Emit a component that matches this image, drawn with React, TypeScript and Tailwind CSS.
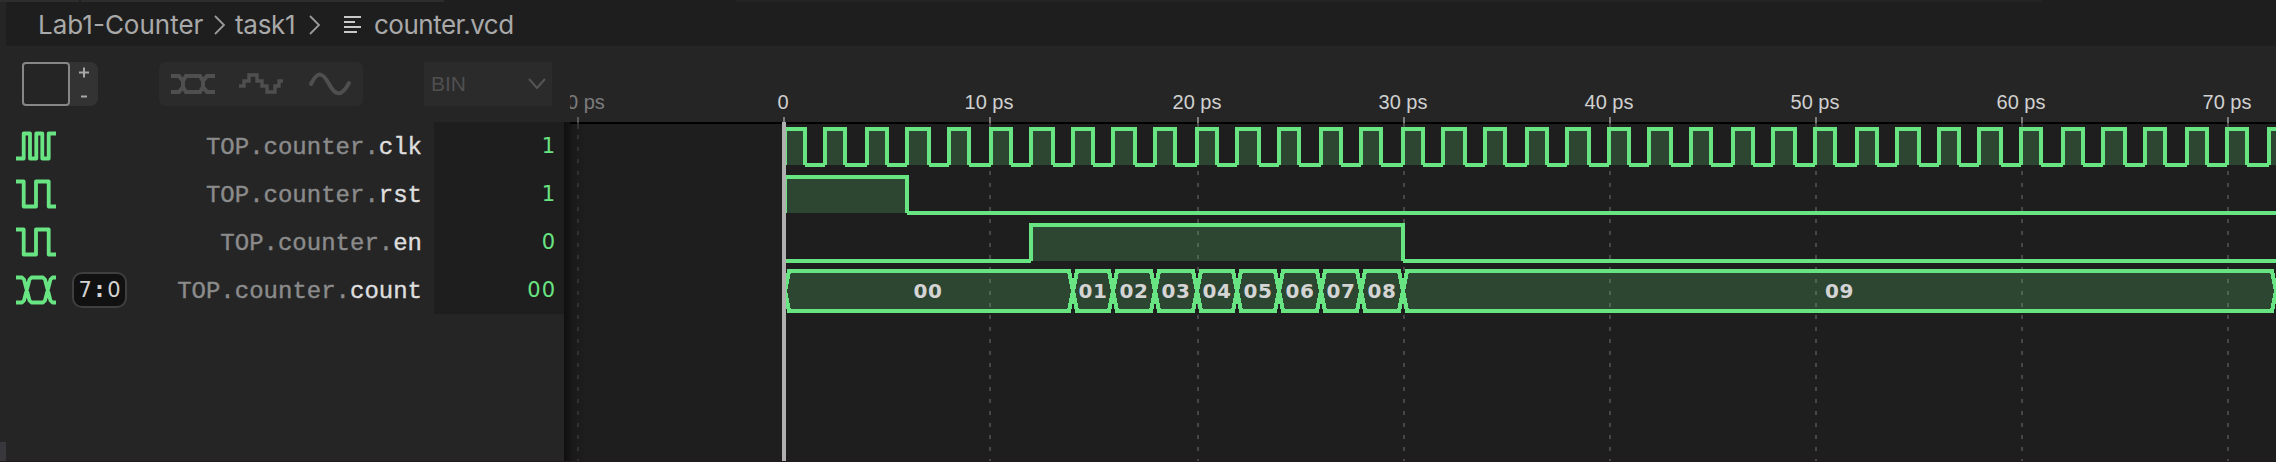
import React from "react";

const GREEN = "#69e482";
const X = (k: number) => (k === 0 ? 785 : Math.floor((783.95 + 20.62 * k) / 2) * 2 + 1);

function Pulse({ a, b, y }: { a: number; b: number; y: number }) {
  return (
    <g>
      <rect x={a} y={y} width={b - a} height={36} fill={GREEN} fillOpacity={0.2} />
      <path d={`M${a} ${y + 36}V${y}H${b}V${y + 36}`} stroke={GREEN} strokeWidth={4} fill="none" />
    </g>
  );
}

function Low({ a, b, y }: { a: number; b: number; y: number }) {
  return <rect x={a} y={y - 2} width={b - a} height={4} fill={GREEN} />;
}

function Bus({ a, b, label, mid }: { a: number; b: number; label: string; mid?: number }) {
  return (
    <g>
      <path
        d={`M${a} 291L${a + 4} 271H${b - 4}L${b} 291L${b - 4} 311H${a + 4}Z`}
        fill={GREEN}
        fillOpacity={0.2}
        stroke={GREEN}
        strokeWidth={4}
      />
      <text
        x={mid ?? (a + b) / 2}
        y={298}
        textAnchor="middle"
        fill="#d4d4d4"
        className="font-['DejaVu_Sans'] text-[20px] font-bold tracking-[0.5px]"
      >
        {label}
      </text>
    </g>
  );
}

const counts = ["01", "02", "03", "04", "05", "06", "07", "08"];
const ticks = [577, 783, 989, 1197, 1403, 1609, 1815, 2021, 2227];
const clk = Array.from({ length: 37 }, (_, i) => i * 2);

function Waves() {
  return (
    <svg width={1712} height={416} viewBox="564 46 1712 416" className="block" shapeRendering="crispEdges">
      <defs>
        <linearGradient id="shade" x1="0" x2="1" y1="0" y2="0">
          <stop offset="0" stopColor="#000" stopOpacity="0.5" />
          <stop offset="0.4" stopColor="#000" stopOpacity="0.15" />
          <stop offset="1" stopColor="#000" stopOpacity="0" />
        </linearGradient>
        <clipPath id="ruler">
          <rect x={570} y={46} width={1706} height={416} />
        </clipPath>
      </defs>
      <rect x={564} y={46} width={1712} height={76} fill="#252526" />
      <rect x={564} y={122} width={1712} height={340} fill="#1e1e1e" />
      <rect x={570} y={122} width={1706} height={2} fill="#000" />
      {ticks.map((x, i) => (
        <g key={x} opacity={i === 0 ? 0.6 : 1}>
          <rect x={x} y={117} width={2} height={6} fill="#7c7c7c" />
          <rect x={x} y={123} width={2} height={6} fill="#4b4b4b" />
          <path d={`M${x + 1} 135V462`} stroke="#474747" strokeWidth={2} strokeDasharray="4 8" />
        </g>
      ))}
      {clk.map((k) => (
        <Pulse key={k} a={X(k)} b={X(k + 1)} y={129} />
      ))}
      {clk.map((k) => (
        <Low key={k} a={X(k + 1)} b={X(k + 2)} y={165} />
      ))}
      <Pulse a={785} b={X(6)} y={177} />
      <Low a={X(6)} b={2276} y={213} />
      <Low a={785} b={X(12)} y={261} />
      <Pulse a={X(12)} b={X(30)} y={225} />
      <Low a={X(30)} b={2276} y={261} />
      <Bus a={785} b={X(14)} label="00" mid={928} />
      {counts.map((c, i) => (
        <Bus key={c} a={X(14 + i * 2)} b={X(16 + i * 2)} label={c} />
      ))}
      <Bus a={X(30)} b={2276} label="09" />
      <g
        fill="#d0d0d0"
        textAnchor="middle"
        clipPath="url(#ruler)"
        className="font-['Liberation_Sans'] text-[20px]"
      >
        {ticks.map((x, i) => (
          <text key={x} x={x} y={109} opacity={i === 0 ? 0.5 : 1}>
            {i === 1 ? "0" : `${(i - 1) * 10} ps`}
          </text>
        ))}
      </g>
      <rect x={564} y={122} width={22} height={340} fill="url(#shade)" />
      <rect x={782} y={122} width={4} height={340} fill="#b0b0ae" />
    </svg>
  );
}

const shapes = {
  clock: "M0 36.5H7.7V11.5H14V36.5H20.3V11.5H26.3V36.5H32.7V11.5H40",
  bit: "M0 11.5H7.7V36.5H20V11.5H32.7V36.5H40",
  bus: "M0 11.5H6L8 13.5L13.5 34.5L15.5 36.5H27L29 34.500L34.500 13.500L36.500 11.500H40M0 36.5H6L8 34.5L13.5 13.5L15.5 11.5H27L29 13.500L34.500 34.500L36.500 36.500H40",
};

const signals: { name: string; value: string; shape: keyof typeof shapes; range?: boolean }[] = [
  { name: "clk", value: "1", shape: "clock" },
  { name: "rst", value: "1", shape: "bit" },
  { name: "en", value: "0", shape: "bit" },
  { name: "count", value: "00", shape: "bus", range: true },
];

function Signals() {
  return (
    <div className="flex flex-col">
      {signals.map((s) => (
        <div key={s.name} className="flex h-12 items-center">
          <svg width={40} height={48} className="ml-[10px] shrink-0" fill="none" stroke={GREEN} strokeWidth={3.8} strokeLinejoin="round">
            <path d={shapes[s.shape]} />
          </svg>
          {s.range && (
            <div className="ml-4 flex h-9 w-[55px] shrink-0 items-center justify-center rounded-[10px] border-2 border-[#3f3f3f] bg-[#111111] pt-px font-['DejaVu_Sans'] text-[21px] leading-none text-[#d4d4d4]">
              <span className="w-[14.4px] text-center">7</span>
              <span className="w-[14.4px] text-center font-bold">:</span>
              <span className="w-[14.4px] text-center">0</span>
            </div>
          )}
          <div className="flex-1 pt-[4px] pr-[12px] text-right font-['Liberation_Mono'] text-[24px] leading-none whitespace-nowrap text-[#8b8b8b] [-webkit-text-stroke:0.4px]">
            TOP.counter.<span className="text-[#dedede]">{s.name}</span>
          </div>
          <div className="flex h-12 w-[130px] items-center justify-end bg-[#1e1e1e] pt-[2px] pr-[8px] font-['DejaVu_Sans'] text-[21px] tracking-[1px] text-[#69e482]">
            {s.value}
          </div>
        </div>
      ))}
    </div>
  );
}

function Toolbar() {
  return (
    <div className="flex h-[76px] items-start pt-4 pl-4">
      <div className="flex h-11 w-[76px] rounded-lg bg-[#333334]">
        <div className="w-12 rounded-[4px] border-2 border-[#878787] bg-[#252526]" />
        <svg width={28} height={44} stroke="#a8a8a8" strokeWidth={2}>
          <path d="M9 10.500H19M14 5.500V15.500M11 34.500H17" />
        </svg>
      </div>
      <div className="ml-[61px] h-11 w-[204px] rounded-md bg-[#2b2b2c]">
        <svg width={204} height={44} fill="none" stroke="#4f4f50" strokeWidth={4}>
          <path d="M12 14H20L24 19V25L20 30H12M56 14H48L44 19V25L48 30H56M24 19L27 14H41L44 19M24 25L27 30H41L44 25" />
          <path d="M80 24H85V19H90V13H98V19H103V24H108V30H116V24H120V19H124" strokeWidth={3.4} />
          <path d="M152 22C159 8 164 11 170 22S182 36 190 21" strokeLinecap="round" />
        </svg>
      </div>
      <div className="ml-[61px] flex h-11 w-32 items-center justify-between bg-[#2b2b2c] pr-[6px] pl-[7px] font-['Liberation_Sans'] text-[21px] text-[#4f4f50]">
        <span>BIN</span>
        <svg width={18} height={12} fill="none" stroke="#555556" strokeWidth={2}>
          <path d="M1 1L9 10L17 1" />
        </svg>
      </div>
    </div>
  );
}

function Crumbs() {
  const arrow = (
    <svg width={12} height={22} fill="none" stroke="#9a9a9a" strokeWidth={1.8} className="shrink-0">
      <path d="M1 2L10 11L1 20" />
    </svg>
  );
  return (
    <div className="flex h-[46px] items-center bg-[#1e1e1e] pt-[3px] pl-8 font-['Inter'] text-[26px] leading-none whitespace-nowrap text-[#a9a9a9]">
      <span className="w-[176px]">Lab1-Counter</span>
      {arrow}
      <span className="ml-[9px] w-[74px] tracking-[-0.3px]">task1</span>
      {arrow}
      <svg width={18} height={20} className="ml-[23px]" stroke="#c8c8c8" strokeWidth={2}>
        <path d="M0 2H17M0 7H11M0 12H17M0 17H13" />
      </svg>
      <span className="ml-[12px] tracking-[-0.5px]">counter.vcd</span>
    </div>
  );
}

export default function App() {
  return (
    <div className="relative flex h-[462px] w-[2276px] overflow-hidden bg-[#252526]">
      <div className="flex w-[6px] shrink-0 flex-col justify-end">
        <div className="h-5 bg-[#38373c]" />
      </div>
      <div className="flex flex-1 flex-col">
        <Crumbs />
        <div className="flex">
          <div className="w-[558px] shrink-0">
            <Toolbar />
            <Signals />
          </div>
          <Waves />
        </div>
      </div>
      <div className="absolute top-0 left-0 flex h-[2px] w-full">
        <div className="w-[79px] bg-[#2d2d2d]" />
        <div className="ml-[2px] w-[363px] bg-[#2d2d2d]" />
        <div className="ml-[291px] w-[1307px] bg-[#232324]" />
      </div>
      <div className="absolute bottom-0 left-0 h-px w-full bg-[#211a1d]" />
    </div>
  );
}
